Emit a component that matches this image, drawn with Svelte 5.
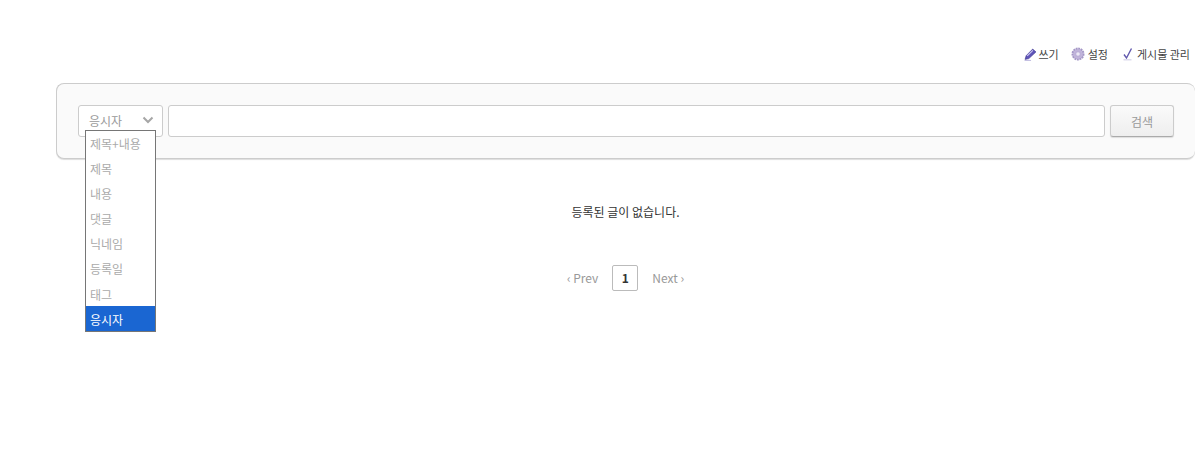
<script>
  const options = ["제목+내용", "제목", "내용", "댓글", "닉네임", "등록일", "태그", "응시자"];
  let selected = "응시자";
</script>

<div class="page">
  <nav class="actions">
    <a href="#write">
      <svg viewBox="0 0 12 12" width="13" height="13">
        <path d="M1 10.500l1-3.400L8 1l3 2.600L4.400 9.800z" fill="#5f54b8" stroke="#3d3590" stroke-width=".6" />
        <path d="M0.500 11.500h6" stroke="#c4c0e2" stroke-width="1" />
        <path d="M3 7.200l5.200-5" stroke="#cfcaf2" stroke-width="1" />
      </svg>
      쓰기
    </a>
    <a href="#settings">
      <svg viewBox="0 0 14 14" width="14" height="14">
        <circle cx="7" cy="7" r="5.600" fill="#c3b7dc" stroke="#a497c6" stroke-width="1.800" stroke-dasharray="1.800 .8" />
        <circle cx="7" cy="7" r="3.600" fill="#bdb0d8" />
        <circle cx="7" cy="7" r="1.800" fill="#ece8f5" />
      </svg>
      설정
    </a>
    <a href="#manage">
      <svg viewBox="0 0 12 14" width="12" height="14">
        <path d="M2 7.500l2.500 3.500L9.500 1.500" fill="none" stroke="#6158ad" stroke-width="1.400" />
        <path d="M1.500 12.800h8" stroke="#d5d2e8" stroke-width="1.200" />
      </svg>
      게시물 관리
    </a>
  </nav>

  <form class="search" onsubmit={(e) => e.preventDefault()}>
    <div class="select">
      <span>{selected}</span>
      <svg viewBox="0 0 12 8" width="12" height="8">
        <path d="M1.500 1.500L6 6l4.500-4.500" fill="none" stroke="#a6a6a6" stroke-width="2" />
      </svg>
      <ul class="menu">
        {#each options as o}
          <li class:active={o === selected}>{o}</li>
        {/each}
      </ul>
    </div>
    <input type="text" />
    <button type="submit">검색</button>
  </form>

  <p class="empty">등록된 글이 없습니다.</p>

  <div class="pager">
    <span>‹ Prev</span>
    <b>1</b>
    <span>Next ›</span>
  </div>
</div>

<style>
  :global(body) {
    background: #fff;
    font-family: "Noto Sans CJK KR", "Noto Sans", sans-serif;
    font-size: 12px;
    color: #333;
  }

  .page {
    margin-left: 56px;
    height: 449px;
    overflow: hidden;
  }

  .actions {
    display: flex;
    justify-content: flex-end;
    align-items: center;
    gap: 12px;
    height: 16px;
    padding: 46px 5px 21px 0;
  }

  .actions a {
    display: flex;
    align-items: center;
    gap: 3px;
    font-size: 11px;
    color: #444;
    text-decoration: none;
  }

  .actions a:nth-child(1) {
    gap: 1px;
  }

  .actions a:nth-child(2) {
    margin-right: 2px;
  }

  .search {
    display: flex;
    gap: 5px;
    box-sizing: border-box;
    height: 76px;
    padding: 21px 21px 0;
    background: #fafafa;
    border: 1px solid #ccc;
    border-right: 0;
    border-radius: 8px;
    box-shadow: 0 1px 1px #ddd;
  }

  .select {
    position: relative;
    box-sizing: border-box;
    display: flex;
    align-items: center;
    justify-content: space-between;
    width: 85px;
    height: 32px;
    padding: 0 8px 2px 10px;
    background: #fff;
    border: 1px solid #ccc;
    border-radius: 3px;
    color: #999;
  }

  .menu {
    position: absolute;
    top: 24px;
    left: 6px;
    width: 69px;
    margin: 0;
    padding: 0;
    list-style: none;
    background: #fff;
    border: 1px solid #767676;
    z-index: 2;
  }

  .menu li {
    height: 25px;
    line-height: 25px;
    padding-left: 4px;
    color: #aaa;
  }

  .menu li:nth-child(n + 7) {
    line-height: 27px;
  }

  .menu li.active {
    background: #1a66d2;
    color: #fff;
  }

  input {
    box-sizing: border-box;
    width: 937px;
    height: 32px;
    padding: 0 8px;
    background: #fff;
    border: 1px solid #ccc;
    border-radius: 3px;
  }

  button {
    box-sizing: border-box;
    width: 64px;
    height: 32px;
    padding: 0;
    background: linear-gradient(#fafafa, #eee);
    border: 1px solid #ccc;
    border-bottom-color: #aaa;
    border-radius: 3px;
    box-shadow: 0 1px 1px #ddd;
    font: inherit;
    color: #999;
  }

  .empty {
    margin: 45px 0 0;
    line-height: 16px;
    text-align: center;
    color: #333;
  }

  .pager {
    display: flex;
    justify-content: center;
    align-items: center;
    gap: 14px;
    margin-top: 45px;
    color: #999;
    line-height: 16px;
  }

  .pager b {
    box-sizing: border-box;
    width: 26px;
    height: 26px;
    line-height: 24px;
    text-align: center;
    border: 1px solid #bbb;
    border-radius: 2px;
    color: #333;
    font-weight: 700;
  }
</style>
